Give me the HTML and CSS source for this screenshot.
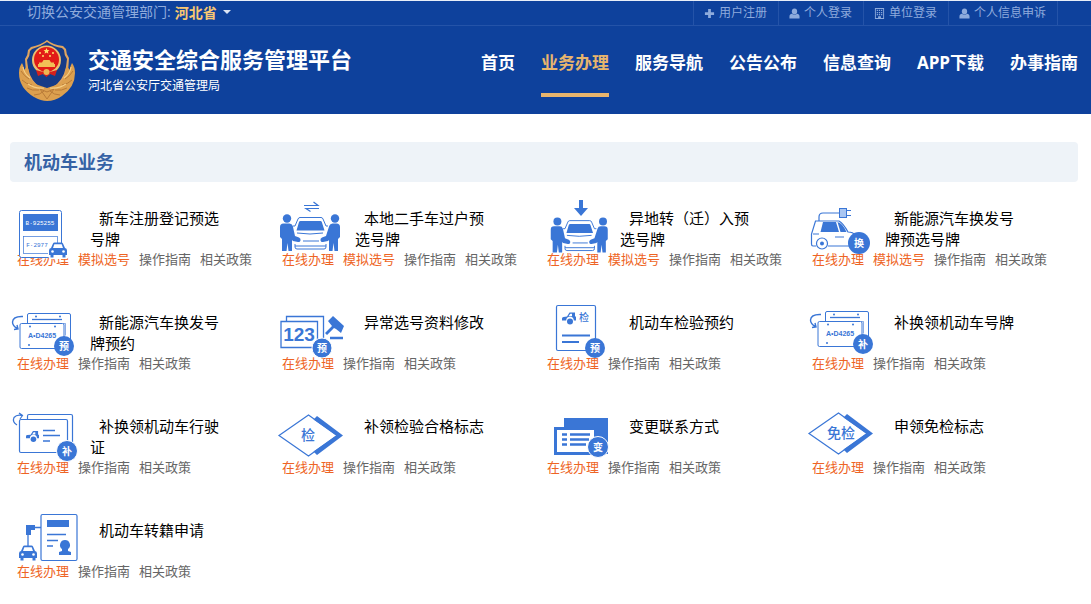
FILE: index.html
```html
<!DOCTYPE html>
<html lang="zh-CN">
<head>
  <meta charset="UTF-8">
  <meta name="viewport" content="width=device-width, initial-scale=1">
  <title>交通安全综合服务管理平台</title>
  <link rel="stylesheet" href="styles.css">
</head>
<body>
  <!-- shared icon parts -->
  <svg class="sprite" aria-hidden="true">
    <symbol id="user" viewBox="0 0 12 12">
      <ellipse cx="6" cy="3.800" rx="2.900" ry="3.300"/>
      <path d="M.5 11.500V9.200C.5 7.300 1.800 6.500 3.200 6.300c1.600 1.300 4 1.300 5.600 0C10.200 6.500 11.500 7.300 11.500 9.200v2.300Z"/>
    </symbol>
    <symbol id="car-front" viewBox="0 0 20 16">
      <path d="M3 6 5 1.500Q5.400.5 6.500.5h7q1.100 0 1.500 1L17 6q2 .4 2 2.500V13h-1.500v2.500h-3V13h-9v2.500h-3V13H1V8.500Q1 6.400 3 6Z" fill="#3a76d6"/>
      <path d="M5 6 6.300 2.300h7.400L15 6Z" fill="#fff"/>
      <circle cx="4.500" cy="9.500" r="1.300" fill="#fff"/>
      <circle cx="15.500" cy="9.500" r="1.300" fill="#fff"/>
    </symbol>
    <symbol id="car-side" viewBox="0 0 14 13">
      <path d="M0 6.500Q0 5 1.500 5L5 4.500 7.500.500H13V4.500h1v4h-2.200a3.800 3.800 0 0 0-7.600 0H0Z" fill="#3a76d6"/>
      <path d="M6.500 4.300 8.300 1.800H10v2.500Z" fill="#fff"/>
      <circle cx="8" cy="9.500" r="3" fill="#3a76d6"/>
    </symbol>
    <symbol id="people-car" viewBox="0 0 70 54" overflow="visible">
      <g fill="#3a76d6">
        <circle cx="12" cy="18.500" r="4.200"/>
        <path d="M5 27q0-3.500 3.500-3.500h6q2.500 0 3.300 2.500L20 36l4 1.500q2 1 1.500 3T23 42l-5-1-1-1v11h-3.500l-1-8-1 8H7V39l-2-2Z"/>
        <circle cx="60" cy="18.500" r="4.200"/>
        <path d="M65 27q0-3.500-3.500-3.500h-4q-2.500 0-3.300 2.500L51 36l-4 1.500q-2 1-1.500 3T48 42l5-1 1-1v11h3.500l1-8 1 8H63V39l2-2Z"/>
        <path d="M25.500 21h20q1 0 1.300 1l2.700 8.500h-28L24 22q.4-1 1.500-1Z"/>
      </g>
      <path d="M18 26h2l3-7q.6-1.500 2-1.500h21q1.500 0 2 1.500l3 7h2M22 33q13 2 26 0M28 41h16M20 44v3q0 2 2 2h27q2 0 2-2v-3M20 46h31" fill="none" stroke="#3a76d6"/>
    </symbol>
    <symbol id="plates" viewBox="0 0 70 50" overflow="visible">
      <g fill="none" stroke="#3a76d6">
        <path d="M17.500 19V11q0-1.500 1.500-1.500h40q1.500 0 1.500 1.500v25"/>
        <path d="M22 15.500h30" stroke-width="1.300"/>
        <path d="M54 34V21q0-1.500-1.500-1.500h-41Q10 19.500 10 21v22q0 1.500 1.500 1.500H46"/>
        <path d="M53 19.500h2.500v12" stroke-width=".6"/>
        <path d="M13 12.500Q3 12 2.500 18q0 4 5 6.500M4 25.500l4-.5-1-4" stroke-width="1.400"/>
      </g>
      <g fill="#3a76d6">
        <circle cx="26" cy="12.500" r="1"/><circle cx="50" cy="12.500" r="1"/>
        <circle cx="20" cy="22.500" r="1"/><circle cx="45" cy="22.500" r="1"/><circle cx="19" cy="41" r="1"/>
        <text x="32" y="34" class="plate-no">A•D4265</text>
      </g>
    </symbol>
    <symbol id="diamond" viewBox="0 0 70 50" overflow="visible">
      <path d="M4 27.500 33.500 7 62 27.500 33.500 48Z" fill="none" stroke="#3a76d6" stroke-width="1.200"/>
      <path d="M42 8 68 27.500 42 47l-3.500-3.500L61.500 27.500 38.500 11.500Z" fill="#3a76d6"/>
    </symbol>
  </svg>

  <div class="topbar">
    <div class="region">
      <span>切换公安交通管理部门:</span>
      <button type="button" class="province">河北省</button>
    </div>
    <div class="account">
      <a href="#"><svg viewBox="0 0 12 12"><path d="M4.500 1h3v3.500H11v3H7.500V11h-3V7.500H1v-3h3.500Z"/></svg>用户注册</a>
      <a href="#"><svg><use href="#user"/></svg>个人登录</a>
      <a href="#"><svg viewBox="0 0 12 12"><path fill-rule="evenodd" d="M1 0h10v12H1ZM2 1v10h2.500V9h3v2H10V1ZM3 2h1.300v1.300H3Zm2.300 0h1.400v1.300H5.300Zm2.400 0H9v1.300H7.700ZM3 4.300h1.300v1.300H3Zm2.300 0h1.400v1.300H5.300Zm2.400 0H9v1.300H7.700ZM3 6.600h1.300v1.300H3Zm2.300 0h1.400v1.300H5.300Zm2.400 0H9v1.300H7.700Z"/></svg>单位登录</a>
      <a href="#"><svg><use href="#user"/></svg>个人信息申诉</a>
    </div>
  </div>

  <header class="header">
    <svg class="emblem" viewBox="0 0 58 62">
      <path d="M29 1Q35 6 45 7l3 3q0 5 3 9 0 19-10 28L29 55 17 48Q7 39 7 20q3-4 3-9l3-3Q23 6 29 1Z" fill="#e0a560"/>
      <path d="M29 3Q36 8 44 9l2 2q0 5 3 9-1 17-10 25L29 52 19 46Q10 38 9 21q3-4 3-9l2-2Q22 8 29 3Z" fill="#173c87"/>
      <path d="M4 24Q1 28 1 34q0 15 15 24 7 4 13 4 8 0 15-5 13-9 13-23 0-6-3-10-2 3-2 7-2-2-3-5-2 5-2 10-3 8-9 10l-9 3-9-3q-7-3-9-10 0-5-2-10-1 3-3 5 0-4-2-7Z" fill="#dca04f"/>
      <path d="M3 32q3 5 8 8M4 41q4 4 10 5M9 49q5 3 12 2M16 56q6 0 10-4M55 32q-3 5-8 8M54 41q-4 4-10 5M49 49q-5 3-12 2M42 56q-6 0-10-4M22 50l7 3 7-3-7 10Z" fill="none" stroke="#b97b38"/>
      <path d="M5 28q1 7 7 11M53 28q-1 7-7 11M10 45q7 5 16 4M48 45q-7 5-16 4" fill="none" stroke="#f6ce85" stroke-width="1.200"/>
      <circle cx="28.500" cy="21" r="14.500" fill="#ecc070"/>
      <circle cx="28.500" cy="20.500" r="12.500" fill="#e21b17"/>
      <path d="m28.500 9 .9 2 2.100.2-1.600 1.400.5 2.100-1.900-1.100-1.900 1.100.5-2.100-1.600-1.400 2.100-.2Z" fill="#ffe06a"/>
      <g fill="#ffe06a"><circle cx="22" cy="14" r="1"/><circle cx="25" cy="17" r="1"/><circle cx="32" cy="17" r="1"/><circle cx="35" cy="14" r="1"/></g>
      <path d="M21 25v-1.500h3l1.500-2.500h6l1.500 2.500h3V25h1v3H20v-3Z" fill="#f2c056"/>
      <path d="M18 31q10.500 4 21 0l-2 6-5-2-3.500 3-3.500-3-5 2Z" fill="#d8201a"/>
      <circle cx="28.500" cy="33" r="3" fill="#edb653"/>
    </svg>
    <div class="brand">
      <h1>交通安全综合服务管理平台</h1>
      <p>河北省公安厅交通管理局</p>
    </div>
    <nav class="nav">
      <a href="#">首页</a>
      <a href="#" class="active">业务办理</a>
      <a href="#">服务导航</a>
      <a href="#">公告公布</a>
      <a href="#">信息查询</a>
      <a href="#">APP下载</a>
      <a href="#">办事指南</a>
    </nav>
  </header>

  <main class="main">
    <h2 class="section-title">机动车业务</h2>
    <div class="services">

      <div class="service">
        <svg class="icon" viewBox="0 0 70 50">
          <rect x="9.500" y="10.500" width="42" height="47" rx="2" fill="#fff" stroke="#3a76d6"/>
          <rect x="13" y="14" width="35" height="17" fill="#3a76d6"/>
          <rect x="13.500" y="36.500" width="34" height="17" fill="#fff" stroke="#3a76d6" stroke-width=".7"/>
          <text x="30" y="25" class="tiny light">B·925255</text>
          <rect x="38" y="43" width="21" height="16" rx="4" fill="#fff"/>
          <text x="27" y="47" class="tiny">F·2977</text>
          <use href="#car-front" x="38" y="42" width="20" height="16"/>
        </svg>
        <h3><a href="#">新车注册登记预选号牌</a></h3>
        <div class="links"><a href="#" class="hot">在线办理</a><a href="#" class="hot">模拟选号</a><a href="#">操作指南</a><a href="#">相关政策</a></div>
      </div>

      <div class="service">
        <svg class="icon" viewBox="0 0 70 50">
          <path d="M29 5.500h14L38.500 2M44 8.500H31l4.500 3" fill="none" stroke="#3a76d6" stroke-width="1.200"/>
          <use href="#people-car" width="70" height="54"/>
        </svg>
        <h3><a href="#">本地二手车过户预选号牌</a></h3>
        <div class="links"><a href="#" class="hot">在线办理</a><a href="#" class="hot">模拟选号</a><a href="#">操作指南</a><a href="#">相关政策</a></div>
      </div>

      <div class="service">
        <svg class="icon" viewBox="0 0 70 50">
          <path d="M39 0h4v8h5l-7 8-7-8h5Z" fill="#3a76d6"/>
          <use href="#people-car" width="70" height="54" transform="translate(6 4) scale(.95)"/>
        </svg>
        <h3><a href="#">异地转（迁）入预选号牌</a></h3>
        <div class="links"><a href="#" class="hot">在线办理</a><a href="#" class="hot">模拟选号</a><a href="#">操作指南</a><a href="#">相关政策</a></div>
      </div>

      <div class="service">
        <svg class="icon" viewBox="0 0 70 50">
          <g fill="none" stroke="#3a76d6" stroke-width="1.200">
            <path d="M14 21v-4q0-4 4-4h16M42 10.500h4M42 15.500h4"/>
            <path d="M11 46H8q-1.500 0-1.500-2V34l4-13H34q4 2 9 11 5 0 7 3M23 46h21M30 37h9M8 34h6"/>
            <circle cx="17" cy="43.500" r="5.500"/>
          </g>
          <rect x="34.500" y="8.500" width="7" height="9" fill="#a9c6f2" stroke="#3a76d6"/>
          <path d="M18 22h13l3 10H15.500ZM32.500 22q5 1 9 10H35.500Z" fill="#3a76d6"/>
          <circle cx="17" cy="43.500" r="2" fill="#3a76d6"/>
          <circle cx="54" cy="43" r="11" fill="#3a76d6"/>
          <text x="54" y="47" class="badge">换</text>
        </svg>
        <h3><a href="#">新能源汽车换发号牌预选号牌</a></h3>
        <div class="links"><a href="#" class="hot">在线办理</a><a href="#" class="hot">模拟选号</a><a href="#">操作指南</a><a href="#">相关政策</a></div>
      </div>

      <div class="service">
        <svg class="icon" viewBox="0 0 70 50">
          <use href="#plates" width="70" height="50"/>
          <circle cx="54" cy="42" r="10" fill="#3a76d6"/>
          <text x="54" y="46" class="badge">预</text>
        </svg>
        <h3><a href="#">新能源汽车换发号牌预约</a></h3>
        <div class="links"><a href="#" class="hot">在线办理</a><a href="#">操作指南</a><a href="#">相关政策</a></div>
      </div>

      <div class="service">
        <svg class="icon" viewBox="0 0 70 50">
          <path d="M11.500 17v-4.500h37V36M6 17.500h36.500v26H6Z" fill="none" stroke="#3a76d6" stroke-width="1.300"/>
          <text x="24" y="37" class="number">123</text>
          <path d="m58 12 11 10-3 7-5-4-2-1-7 7-2-2 7-7-4-5Z" fill="#3a76d6"/>
          <path d="M55 34h13" stroke="#3a76d6" stroke-width="2.500"/>
          <circle cx="47" cy="44" r="10" fill="#3a76d6" stroke="#fff"/>
          <text x="47" y="48" class="badge">预</text>
        </svg>
        <h3><a href="#">异常选号资料修改</a></h3>
        <div class="links"><a href="#" class="hot">在线办理</a><a href="#">操作指南</a><a href="#">相关政策</a></div>
      </div>

      <div class="service">
        <svg class="icon" viewBox="0 0 70 50">
          <rect x="16.500" y="1.500" width="39" height="45" rx="1.500" fill="none" stroke="#3a76d6" stroke-width="1.200"/>
          <use href="#car-side" x="22" y="8" width="14" height="13"/>
          <text x="44" y="17" class="mark-sm">检</text>
          <path d="M22 31.500h28M22 38h17" stroke="#3a76d6" stroke-width="2"/>
          <circle cx="55" cy="44" r="10" fill="#3a76d6"/>
          <text x="55" y="48" class="badge">预</text>
        </svg>
        <h3><a href="#">机动车检验预约</a></h3>
        <div class="links"><a href="#" class="hot">在线办理</a><a href="#">操作指南</a><a href="#">相关政策</a></div>
      </div>

      <div class="service">
        <svg class="icon" viewBox="0 0 70 50">
          <use href="#plates" x="3" y="-2" width="70" height="50"/>
          <circle cx="58" cy="40" r="10" fill="#3a76d6"/>
          <text x="58" y="44" class="badge">补</text>
        </svg>
        <h3><a href="#">补换领机动车号牌</a></h3>
        <div class="links"><a href="#" class="hot">在线办理</a><a href="#">操作指南</a><a href="#">相关政策</a></div>
      </div>

      <div class="service">
        <svg class="icon" viewBox="0 0 70 50">
          <g fill="none" stroke="#3a76d6" stroke-width="1.200">
            <path d="M17.500 11V8q0-1.500 1.500-1.500h42q1.500 0 1.500 1.500v26"/>
            <rect x="9.500" y="11.500" width="48" height="33" rx="1.500"/>
            <path d="M7 17q-5-3-3-7.500Q7 6 12 7.500M9 5l3.500 2.500L10 11"/>
          </g>
          <use href="#car-side" x="16" y="22" width="13" height="13"/>
          <path d="M33 22.500h12M33 27.500h17M33 33h7" stroke="#3a76d6" stroke-width="1.500"/>
          <circle cx="57" cy="43" r="10.500" fill="#3a76d6" stroke="#fff"/>
          <text x="57" y="47" class="badge">补</text>
        </svg>
        <h3><a href="#">补换领机动车行驶证</a></h3>
        <div class="links"><a href="#" class="hot">在线办理</a><a href="#">操作指南</a><a href="#">相关政策</a></div>
      </div>

      <div class="service">
        <svg class="icon" viewBox="0 0 70 50">
          <use href="#diamond" width="70" height="50"/>
          <text x="33" y="32" class="mark">检</text>
        </svg>
        <h3><a href="#">补领检验合格标志</a></h3>
        <div class="links"><a href="#" class="hot">在线办理</a><a href="#">操作指南</a><a href="#">相关政策</a></div>
      </div>

      <div class="service">
        <svg class="icon" viewBox="0 0 70 50">
          <path d="M24 10h44v36H24Z" fill="#3a76d6"/>
          <rect x="15.500" y="20.500" width="40" height="25" fill="#fff" stroke="#3a76d6" stroke-width="3"/>
          <path d="M22 26.500h5M30 26.500h20M22 31.500h5M30 31.500h19M22 36.500h5M30 36.500h16" stroke="#3a76d6" stroke-width="2.400"/>
          <circle cx="58" cy="39" r="10.500" fill="#3a76d6" stroke="#fff"/>
          <text x="58" y="43" class="badge">变</text>
        </svg>
        <h3><a href="#">变更联系方式</a></h3>
        <div class="links"><a href="#" class="hot">在线办理</a><a href="#">操作指南</a><a href="#">相关政策</a></div>
      </div>

      <div class="service">
        <svg class="icon" viewBox="0 0 70 50">
          <use href="#diamond" y="-2" width="70" height="50"/>
          <text x="36" y="30" class="mark">免检</text>
        </svg>
        <h3><a href="#">申领免检标志</a></h3>
        <div class="links"><a href="#" class="hot">在线办理</a><a href="#">操作指南</a><a href="#">相关政策</a></div>
      </div>

      <div class="service">
        <svg class="icon" viewBox="0 0 70 50">
          <rect x="31" y="2.500" width="36" height="46" rx="1.500" fill="none" stroke="#3a76d6" stroke-width="1.200"/>
          <path d="M37 8h22v7H37ZM16 13h9v5h-4v5h-5Z" fill="#3a76d6"/>
          <path d="M25 15.500h6M18 22v12M37 22.500h19M37 28.500h11M37 34h6" fill="none" stroke="#3a76d6" stroke-width="1.300"/>
          <path d="M55 28a5 5 0 0 1 3 9v2l3 1v3H49v-3l3-1v-2a5 5 0 0 1 3-9Z" fill="#3a76d6"/>
          <use href="#car-front" x="8" y="33" width="20" height="16"/>
        </svg>
        <h3><a href="#">机动车转籍申请</a></h3>
        <div class="links"><a href="#" class="hot">在线办理</a><a href="#">操作指南</a><a href="#">相关政策</a></div>
      </div>

    </div>
  </main>
</body>
</html>
```

FILE: styles.css
```css
* {
  box-sizing: border-box;
  margin: 0;
  padding: 0;
}

body {
  background: #fff;
  color: #000;
  font-family: "Open Sans", "Noto Sans CJK SC", sans-serif;
  font-size: 15px;
}

a {
  color: inherit;
  text-decoration: none;
}

.sprite {
  position: absolute;
  width: 0;
  height: 0;
}

/* top bar */
.topbar {
  display: flex;
  justify-content: space-between;
  height: 26px;
  padding: 0 33px 0 27px;
  background: #0e419c;
  border-top: 1px solid #e8eef8;
  border-bottom: 1px solid #2453a8;
  color: #8eabdc;
  line-height: 22px;
}

.region {
  display: flex;
  gap: 4px;
  font-size: 14px;
}

.province {
  display: flex;
  align-items: center;
  gap: 6px;
  height: 22px;
  background: none;
  border: none;
  color: #f9c872;
  font-family: inherit;
  font-size: 14px;
  font-weight: bold;
  cursor: pointer;
}

.province::after {
  content: "";
  border: 4px solid transparent;
  border-top-color: #dbe5f5;
  border-bottom: none;
}

.account {
  display: flex;
  border-right: 1px solid #2453a8;
  font-size: 12px;
}

.account a {
  display: flex;
  align-items: center;
  gap: 4px;
  padding: 0 11px 0 10px;
  border-left: 1px solid #2453a8;
}

.account svg {
  width: 11px;
  height: 11px;
  fill: #8eabdc;
}

/* header */
.header {
  display: flex;
  align-items: center;
  height: 88px;
  padding: 0 13px 0 18px;
  background: #0e419c;
  color: #fff;
}

.emblem {
  width: 58px;
  height: 62px;
  margin-right: 12px;
}

.brand {
  flex: 1;
}

.brand h1 {
  font-size: 22px;
  line-height: 32px;
}

.brand p {
  font-size: 12px;
  line-height: 22px;
}

.nav {
  display: flex;
  gap: 26px;
  font-size: 17px;
  font-weight: bold;
  white-space: nowrap;
}

.nav a {
  padding: 5px 0 15px;
  border-bottom: 4px solid transparent;
  line-height: 30px;
}

.nav .active {
  color: #e8b56d;
  border-bottom-color: #e8b56d;
}

/* services */
.main {
  padding: 28px 13px 28px 10px;
}

.section-title {
  padding: 0 14px;
  background: #eef3f8;
  border-radius: 4px;
  color: #3562a5;
  font-size: 18px;
  line-height: 40px;
}

.services {
  display: grid;
  grid-template-columns: repeat(4, 1fr);
  row-gap: 34px;
  padding: 18px 8px 0 0;
}

.service {
  display: grid;
  grid-template-columns: 70px 135px;
  grid-template-rows: 50px 20px;
  column-gap: 10px;
}

.icon {
  width: 70px;
  height: 50px;
  overflow: visible;
  z-index: 1;
}

.service h3 {
  padding-top: 8px;
  font-size: 15px;
  font-weight: normal;
  line-height: 21px;
  text-indent: 9px;
}

.links {
  display: flex;
  grid-column: 1 / -1;
  gap: 9px;
  padding-left: 7px;
  color: #666;
  font-size: 13px;
  line-height: 18px;
  white-space: nowrap;
}

.links .hot {
  color: #ee6424;
}

/* lettering inside the icons */
.icon text,
.plate-no {
  fill: #3a76d6;
  text-anchor: middle;
}

.icon .badge {
  fill: #fff;
  font-size: 10px;
  font-weight: bold;
}

.icon .tiny {
  font-family: "Liberation Mono", monospace;
  font-size: 6px;
}

.icon .light {
  fill: #fff;
}

.plate-no {
  font-family: "Liberation Sans", sans-serif;
  font-size: 7px;
  font-weight: bold;
}

.icon .number {
  font-family: "Liberation Sans", sans-serif;
  font-size: 19px;
  font-weight: bold;
}

.icon .mark {
  font-size: 14px;
  font-weight: 500;
}

.icon .mark-sm {
  font-size: 10px;
  font-weight: 500;
}
```
